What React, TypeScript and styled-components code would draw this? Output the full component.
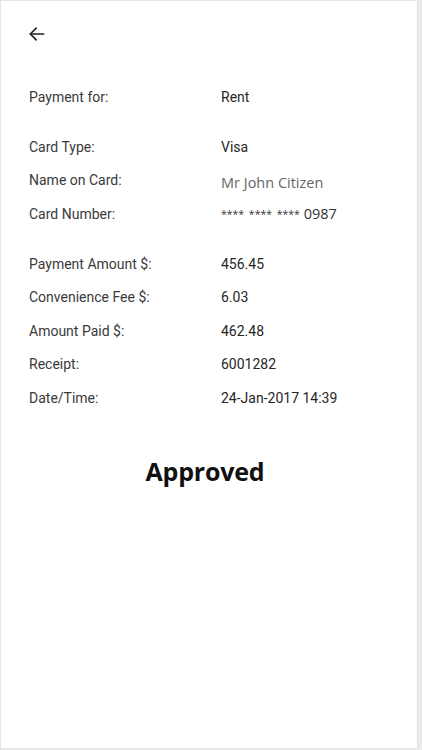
import React from "react";
import styled, { createGlobalStyle } from "styled-components";

const Global = createGlobalStyle`
  html, body { margin: 0; padding: 0; background: #ececec; }
  body { font-family: Roboto, "Liberation Sans", sans-serif; }
`;

const Screen = styled.div`
  box-sizing: border-box;
  width: 418px;
  height: 749px;
  background: #ffffff;
  border-left: 1px solid #e6e6e6;
  border-top: 1px solid #e6e6e6;
  border-bottom: 1px solid #e6e6e6;
  border-right: 1px solid #e2e2e2;
  display: flex;
  flex-direction: column;
`;

const TopBar = styled.div`
  height: 64px;
  display: flex;
  align-items: flex-start;
  padding: 22px 0 0 25px;
  box-sizing: border-box;
`;

const BackButton = styled.button`
  border: none;
  background: none;
  padding: 0;
  width: 22px;
  height: 22px;
  display: flex;
  align-items: center;
  justify-content: center;
  cursor: pointer;
  color: #222;
`;

const Details = styled.div`
  padding: 15px 0 0 28px;
  display: flex;
  flex-direction: column;
`;

const Group = styled.div<{ $gap?: number }>`
  display: flex;
  flex-direction: column;
  margin-bottom: ${(p) => p.$gap ?? 16.5}px;
`;

const Row = styled.div`
  display: grid;
  grid-template-columns: 192px 1fr;
  height: 33.5px;
  align-items: center;
`;

const Label = styled.span`
  font-family: Roboto, "Liberation Sans", sans-serif;
  font-size: 14px;
  color: #3a3a3a;
`;

const Value = styled.span<{ $alt?: boolean }>`
  font-family: ${(p) =>
    p.$alt ? `"Open Sans", "Noto Sans", sans-serif` : `Roboto, "Liberation Sans", sans-serif`};
  font-size: ${(p) => (p.$alt ? "14.5px" : "14px")};
  color: ${(p) => (p.$alt ? "#666666" : "#262626")};
  padding-top: ${(p) => (p.$alt ? "4px" : "0")};
`;

const Stars = styled.span`
  font-family: "Open Sans", "Noto Sans", sans-serif;
  font-size: 10.5px;
  word-spacing: 2px;
  color: #333;
  vertical-align: 1px;
`;

const Digits = styled.span`
  font-family: "Open Sans", "Noto Sans", sans-serif;
  font-size: 14.5px;
  color: #333;
`;

const Status = styled.div`
  margin-top: 39px;
  text-align: center;
  padding-right: 8px;
  font-family: "Open Sans", "Noto Sans", sans-serif;
  font-weight: 700;
  font-size: 25px;
  letter-spacing: -0.2px;
  color: #111;
`;

type Item = { label: string; value: React.ReactNode; alt?: boolean };

const groups: Item[][] = [
  [{ label: "Payment for:", value: "Rent" }],
  [
    { label: "Card Type:", value: "Visa" },
    { label: "Name on Card:", value: "Mr John Citizen", alt: true },
    {
      label: "Card Number:",
      value: (
        <>
          <Stars>**** **** ****</Stars>
          <Digits> 0987</Digits>
        </>
      ),
    },
  ],
  [
    { label: "Payment Amount $:", value: "456.45" },
    { label: "Convenience Fee $:", value: "6.03" },
    { label: "Amount Paid $:", value: "462.48" },
    { label: "Receipt:", value: "6001282" },
    { label: "Date/Time:", value: "24-Jan-2017 14:39" },
  ],
];

export default function App() {
  return (
    <>
      <Global />
      <Screen>
        <TopBar>
          <BackButton aria-label="Back">
            <svg width="20" height="20" viewBox="0 0 24 24" fill="none" stroke="currentColor" strokeWidth="2" strokeLinecap="round" strokeLinejoin="round">
              <path d="M20 12H4" />
              <path d="M11 5l-7 7 7 7" />
            </svg>
          </BackButton>
        </TopBar>
        <Details>
          {groups.map((g, i) => (
            <Group key={i} $gap={i === groups.length - 1 ? 0 : 16.5}>
              {g.map((it) => (
                <Row key={it.label}>
                  <Label>{it.label}</Label>
                  <Value $alt={it.alt}>{it.value}</Value>
                </Row>
              ))}
            </Group>
          ))}
        </Details>
        <Status>Approved</Status>
      </Screen>
    </>
  );
}
